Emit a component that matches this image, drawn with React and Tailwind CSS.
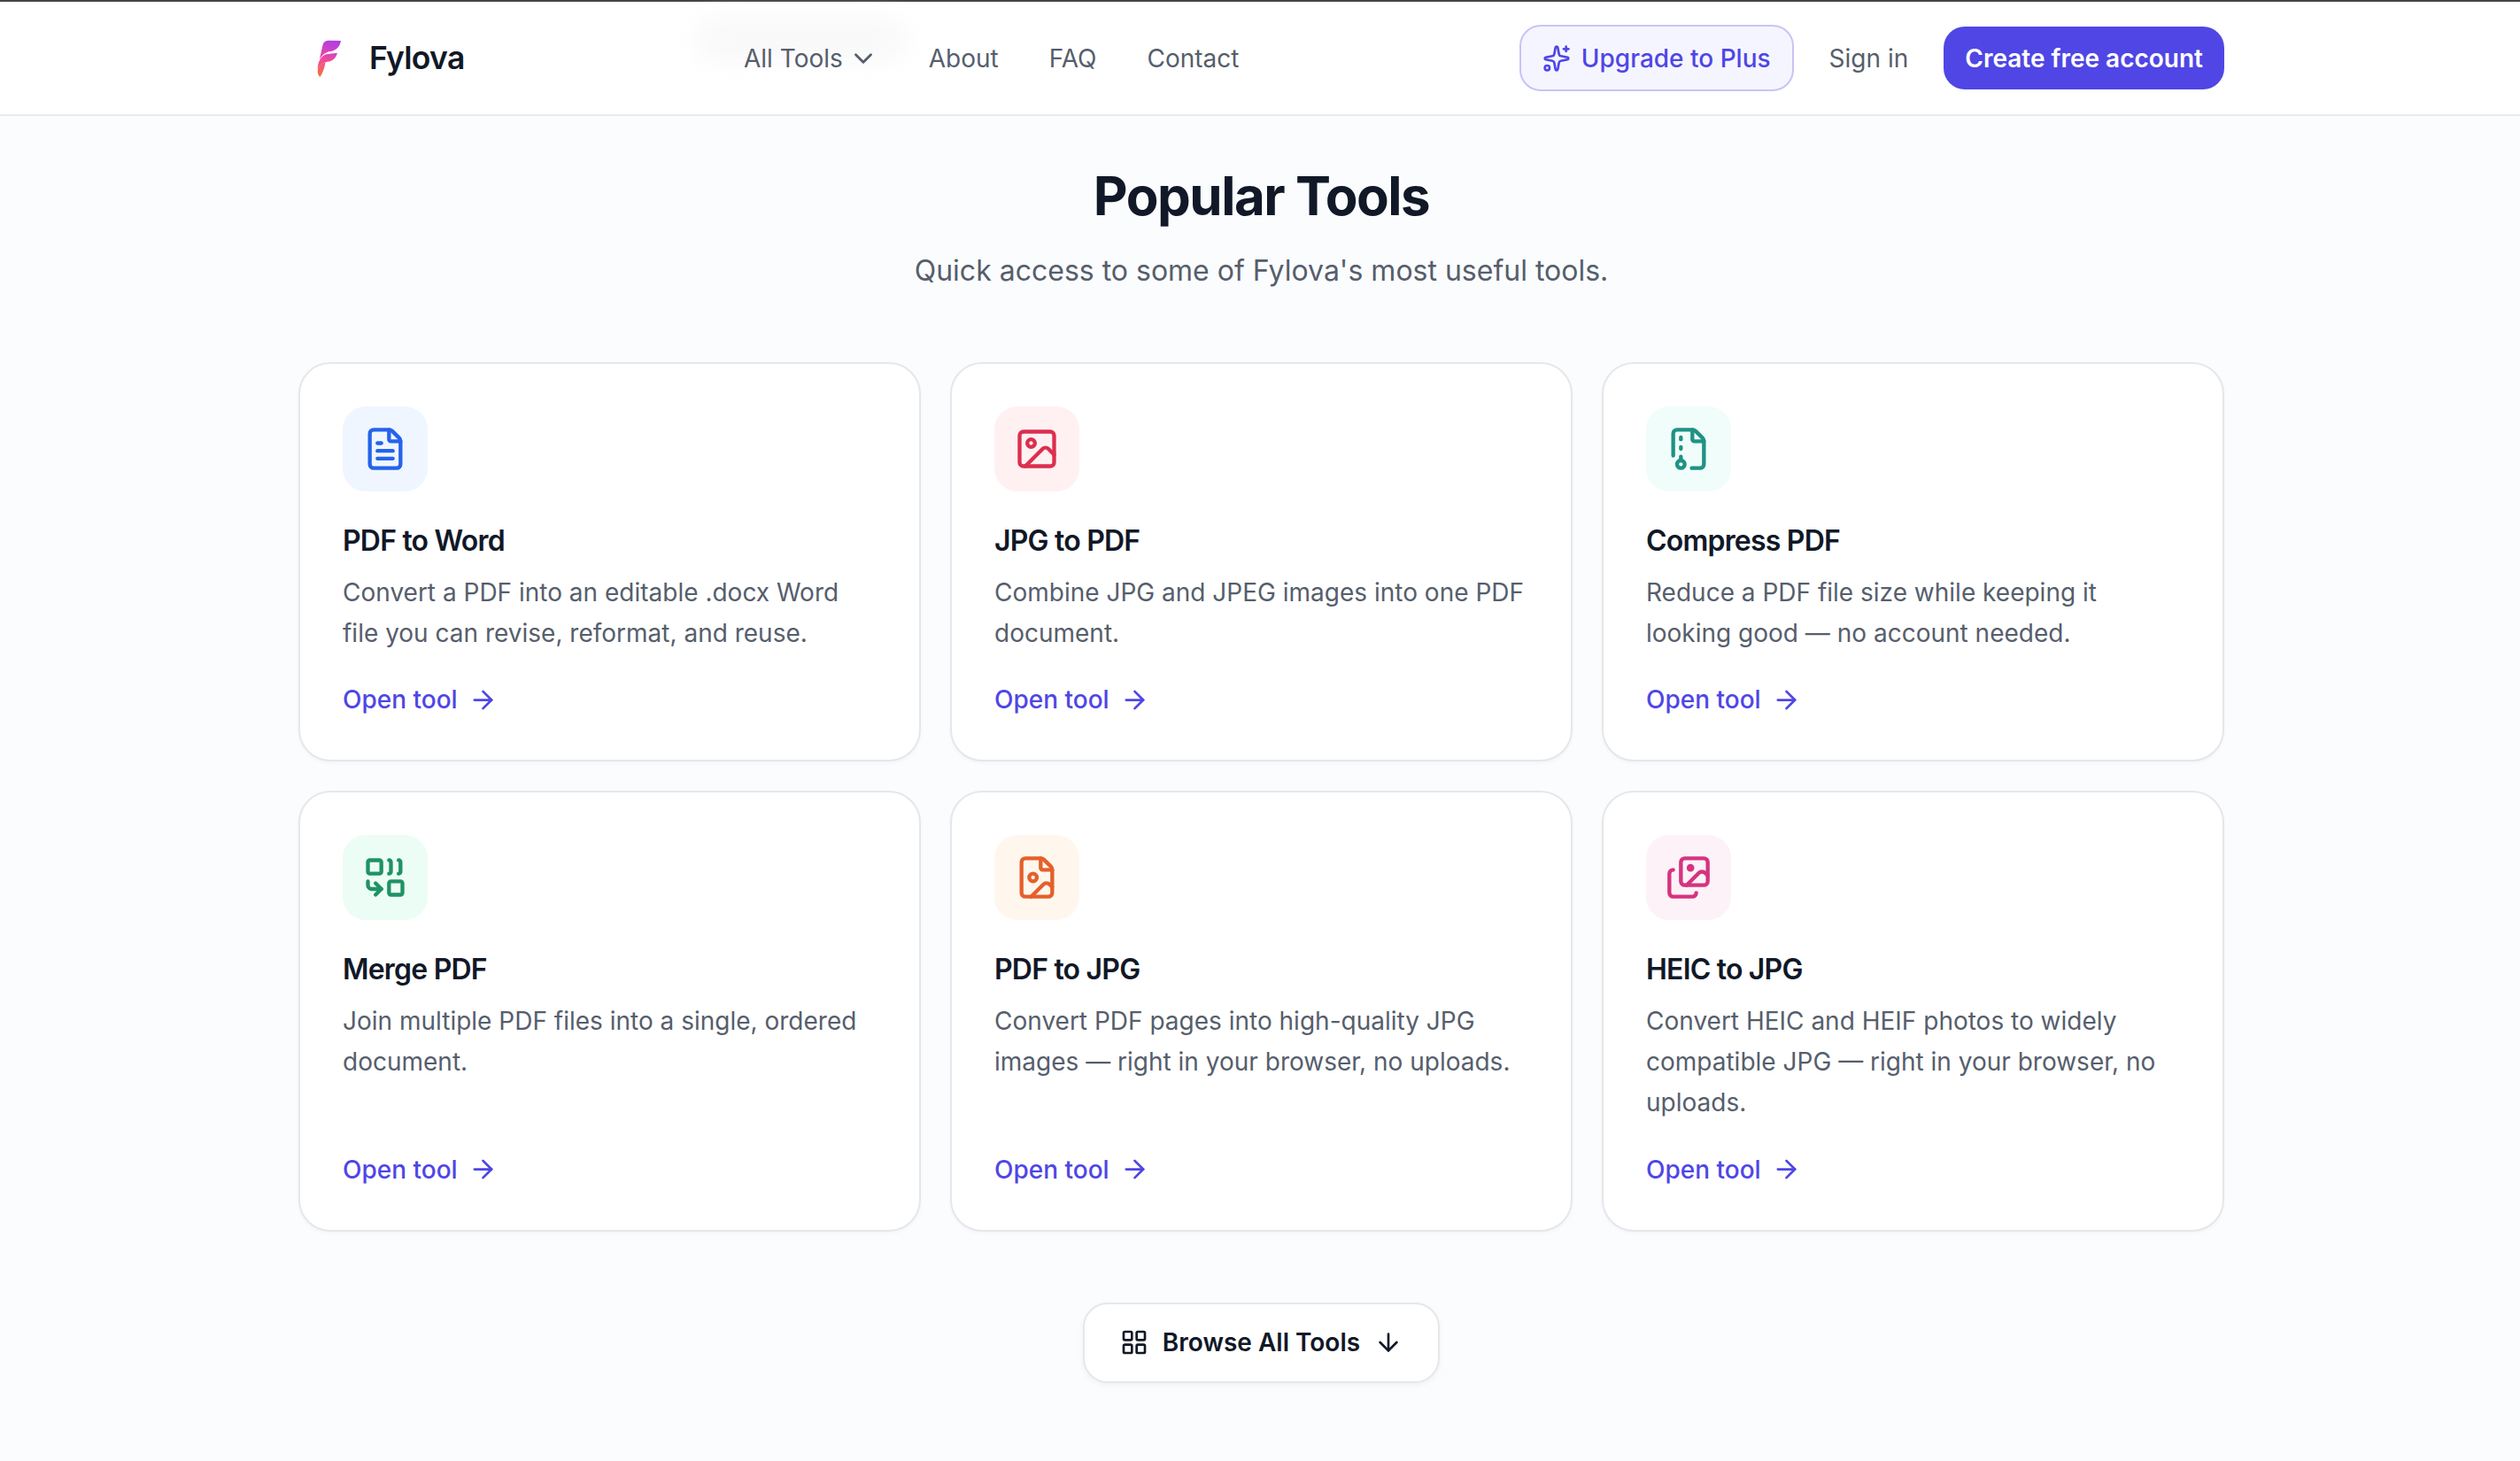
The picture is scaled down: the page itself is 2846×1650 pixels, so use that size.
import React from "react";
import { ChevronDown, Sparkles, FileText, Image, FileArchive, Combine, FileImage, Images, ArrowRight, ArrowDown, LayoutGrid } from "lucide-react";

const tools = [
  { title: "PDF to Word", desc: "Convert a PDF into an editable .docx Word file you can revise, reformat, and reuse.", Icon: FileText, box: "bg-[#eff6ff]", color: "text-[#2563eb]" },
  { title: "JPG to PDF", desc: "Combine JPG and JPEG images into one PDF document.", Icon: Image, box: "bg-[#fff1f2]", color: "text-[#dc2f4e]" },
  { title: "Compress PDF", desc: "Reduce a PDF file size while keeping it looking good — no account needed.", Icon: FileArchive, box: "bg-[#f0fdfa]", color: "text-[#1f9285]" },
  { title: "Merge PDF", desc: "Join multiple PDF files into a single, ordered document.", Icon: Combine, box: "bg-[#ecfdf5]", color: "text-[#1f9265]" },
  { title: "PDF to JPG", desc: "Convert PDF pages into high-quality JPG images — right in your browser, no uploads.", Icon: FileImage, box: "bg-[#fff7ed]", color: "text-[#e5602a]" },
  { title: "HEIC to JPG", desc: "Convert HEIC and HEIF photos to widely compatible JPG — right in your browser, no uploads.", Icon: Images, box: "bg-[#fdf2f8]", color: "text-[#d6337f]" },
];

function Logo() {
  return (
    <svg width="27" height="42" viewBox="0 0 80 125" fill="none">
      <defs>
        <linearGradient id="lg" x1="50" y1="0" x2="10" y2="125" gradientUnits="userSpaceOnUse">
          <stop offset="0" stopColor="#b13be8" />
          <stop offset="0.55" stopColor="#f04a9c" />
          <stop offset="1" stopColor="#f4743a" />
        </linearGradient>
      </defs>
      <path d="M80 3 C78 20 66 36 46 39 C30 41 18 50 8 66 L20 14 C23 5 30 2 40 2 Z" fill="url(#lg)" />
      <path d="M68 44 C64 62 52 72 35 74 C22 76 10 84 2 98 C2 78 10 56 30 48 Z" fill="url(#lg)" />
      <path d="M28 76 C25 95 19 112 10 125 C2 118 0 105 4 95 C9 85 18 79 28 76 Z" fill="url(#lg)" />
    </svg>
  );
}

function Card({ t }) {
  const { Icon } = t;
  return (
    <a className="flex flex-col rounded-[36px] border-2 border-[#e5e7eb] bg-white p-[48px] pb-[45px] shadow-[0_2px_4px_rgba(0,0,0,0.03)]">
      <div className={`flex h-[96px] w-[96px] items-center justify-center rounded-[26px] ${t.box}`}>
        <Icon className={`h-[52px] w-[52px] ${t.color}`} strokeWidth={2} />
      </div>
      <h3 className="mt-[33px] text-[32px] leading-[46px] font-semibold tracking-[-0.8px] text-[#111827]">{t.title}</h3>
      <p className="mt-[13px] flex-1 text-[28px] leading-[45.7px] text-[#565e6c]">{t.desc}</p>
      <div className="mt-[29px] flex items-center gap-[12px] text-[28px] leading-[46px] font-medium text-[#4f46e5]">
        <span>Open tool</span>
        <ArrowRight className="h-[33px] w-[33px]" strokeWidth={2} />
      </div>
    </a>
  );
}

export default function App() {
  return (
    <div className="min-h-[1650px] bg-[#fbfcfe] font-['Inter',sans-serif]">
      <header className="relative h-[131px] border-t-2 border-b-2 border-t-[#444] border-b-[#e9eaee] bg-white">
        <div className="absolute top-[18px] left-[785px] h-[50px] w-[240px] rounded-full bg-[#f9f9fa] blur-[12px]" />
        <div className="relative ml-[337px] flex h-full w-[2175px] items-center">
          <div className="flex w-[501px] items-center gap-[32px] pl-[21px]">
            <Logo />
            <span className="text-[35.5px] font-semibold tracking-[-0.7px] text-[#111827]">Fylova</span>
          </div>
          <nav className="ml-[2px] flex items-center gap-[57px] text-[28px] text-[#565e6c]">
            <span className="flex items-center gap-[6px]">All Tools <ChevronDown className="h-[34px] w-[34px]" strokeWidth={2} /></span>
            <span>About</span>
            <span>FAQ</span>
            <span>Contact</span>
          </nav>
          <div className="ml-auto flex items-center gap-[40px]">
            <button className="flex h-[75px] items-center gap-[12px] rounded-[24px] border-2 border-[#c7c4f7] bg-[#f5f5ff] px-[24px] text-[28px] font-medium text-[#4f46e5]">
              <Sparkles className="h-[32px] w-[32px]" strokeWidth={2} />
              Upgrade to Plus
            </button>
            <span className="text-[28px] text-[#565e6c]">Sign in</span>
            <button className="h-[71px] rounded-[24px] bg-[#4f46e5] px-[24px] text-[28px] font-semibold text-white">Create free account</button>
          </div>
        </div>
      </header>
      <main className="ml-[337px] w-[2175px] pt-[51px]">
        <h1 className="text-center text-[60px] leading-[78px] font-bold tracking-[-1.5px] text-[#111827]">Popular Tools</h1>
        <p className="mt-[21px] text-center text-[32px] leading-[50px] text-[#565e6c]">Quick access to some of Fylova's most useful tools.</p>
        <div className="mt-[78px] grid grid-cols-3 gap-[33px]">
          {tools.map((t) => <Card key={t.title} t={t} />)}
        </div>
        <div className="mt-[80px] flex justify-center">
          <button className="flex h-[91px] items-center gap-[16px] rounded-[28px] border-2 border-[#e5e7eb] bg-white px-[40px] text-[28px] font-semibold text-[#111827] shadow-[0_2px_6px_rgba(0,0,0,0.05)]">
            <LayoutGrid className="h-[32px] w-[32px]" strokeWidth={2} />
            Browse All Tools
            <ArrowDown className="h-[32px] w-[32px]" strokeWidth={2} />
          </button>
        </div>
      </main>
    </div>
  );
}
